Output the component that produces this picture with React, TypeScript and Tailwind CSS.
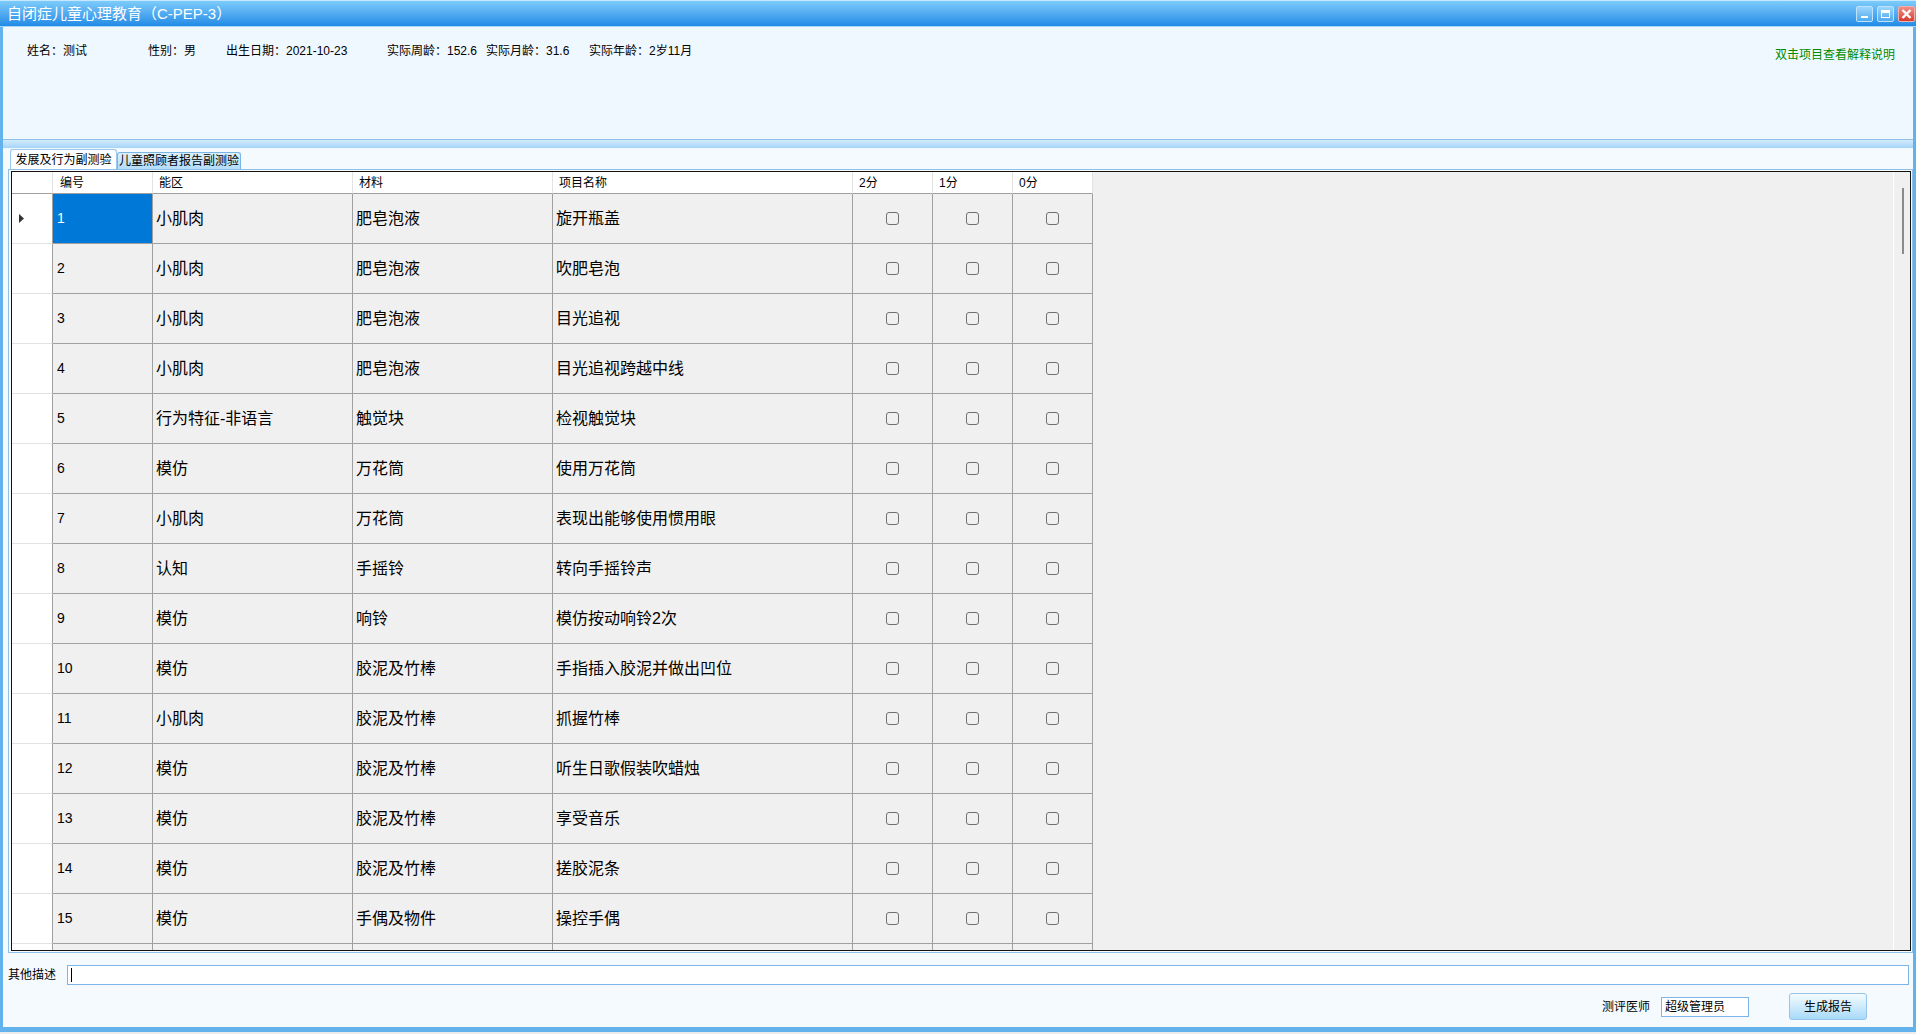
import React from 'react';

interface Item {
  id: number | null;
  area: string;
  material: string;
  name: string;
}

const items: Item[] = [
  { id: 1, area: '小肌肉', material: '肥皂泡液', name: '旋开瓶盖' },
  { id: 2, area: '小肌肉', material: '肥皂泡液', name: '吹肥皂泡' },
  { id: 3, area: '小肌肉', material: '肥皂泡液', name: '目光追视' },
  { id: 4, area: '小肌肉', material: '肥皂泡液', name: '目光追视跨越中线' },
  { id: 5, area: '行为特征-非语言', material: '触觉块', name: '检视触觉块' },
  { id: 6, area: '模仿', material: '万花筒', name: '使用万花筒' },
  { id: 7, area: '小肌肉', material: '万花筒', name: '表现出能够使用惯用眼' },
  { id: 8, area: '认知', material: '手摇铃', name: '转向手摇铃声' },
  { id: 9, area: '模仿', material: '响铃', name: '模仿按动响铃2次' },
  { id: 10, area: '模仿', material: '胶泥及竹棒', name: '手指插入胶泥并做出凹位' },
  { id: 11, area: '小肌肉', material: '胶泥及竹棒', name: '抓握竹棒' },
  { id: 12, area: '模仿', material: '胶泥及竹棒', name: '听生日歌假装吹蜡烛' },
  { id: 13, area: '模仿', material: '胶泥及竹棒', name: '享受音乐' },
  { id: 14, area: '模仿', material: '胶泥及竹棒', name: '搓胶泥条' },
  { id: 15, area: '模仿', material: '手偶及物件', name: '操控手偶' },
  // next row is only a sliver at the bottom edge
  { id: null, area: '', material: '', name: '' },
];

const info = [
  { text: '姓名：测试', w: 'w-[121px]' },
  { text: '性别：男', w: 'w-[78px]' },
  { text: '出生日期：2021-10-23', w: 'w-[161px]' },
  { text: '实际周龄：152.6', w: 'w-[99px]' },
  { text: '实际月龄：31.6', w: 'w-[103px]' },
  { text: '实际年龄：2岁11月', w: '' },
];

function Box() {
  return <span className="block w-[13px] h-[13px] rounded-[3px] border border-[#707070]" />;
}

function WinButtons() {
  return (
    <div className="flex gap-[4px] pr-[1px]">
      <div className="w-[17px] h-[16px] rounded-[2px] border border-[#bfe3ff] bg-gradient-to-b from-[#9ad6fc] to-[#4ea9ee] flex items-end justify-center pb-[3px]">
        <span className="block w-[7px] h-[2px] bg-white" />
      </div>
      <div className="w-[17px] h-[16px] rounded-[2px] border border-[#bfe3ff] bg-gradient-to-b from-[#9ad6fc] to-[#4ea9ee] flex items-center justify-center">
        <span className="block w-[9px] h-[8px] border border-white border-t-[3px]" />
      </div>
      <div className="w-[17px] h-[16px] rounded-[2px] border border-[#f3b1aa] bg-gradient-to-b from-[#f08f86] to-[#d33a2f] flex items-center justify-center">
        <svg width="11" height="10" viewBox="0 0 11 10">
          <path d="M1.5 1 L9.5 9 M9.5 1 L1.5 9" stroke="white" strokeWidth="2.4" />
        </svg>
      </div>
    </div>
  );
}

export default function App() {
  const cell = 'h-[50px] shrink-0 border-b border-r border-[#a0a0a0] flex items-center';
  const head = 'h-[22px] shrink-0 bg-white border-b border-b-[#a0a0a0] border-r border-r-[#e3e3e3] flex items-center pl-[6px] text-[12px]';

  return (
    <div className="w-[1916px] h-[1034px] overflow-hidden bg-[#ececec] font-['Liberation_Sans','Noto_Sans_CJK_SC',sans-serif] text-black">
      <div className="h-[1032px] flex flex-col">
        {/* title bar */}
        <div className="h-[27px] shrink-0 flex items-center justify-between border-t border-[#c6e8ff] border-b border-b-[#a8d6f7] bg-gradient-to-b from-[#7ccbfa] to-[#208be6]">
          <span className="pl-[7px] text-[15px] leading-[18px] text-white">自闭症儿童心理教育（C-PEP-3）</span>
          <WinButtons />
        </div>

        <div className="flex-1 flex flex-col border-x-[3px] border-b-[5px] border-[#62b2ee] bg-[#f5faff]">
          {/* patient info */}
          <div className="h-[113px] shrink-0 flex justify-between bg-[#f0f8ff] border-b border-[#8fc0ea]">
            <div className="flex pl-[24px] pt-[17px] text-[12px] leading-[14px] h-fit">
              {info.map(i => (
                <span key={i.text} className={`${i.w} shrink-0 whitespace-nowrap`}>{i.text}</span>
              ))}
            </div>
            <span className="pt-[21px] pr-[18px] text-[12px] leading-[14px] text-[#008a00]">双击项目查看解释说明</span>
          </div>

          {/* splitter */}
          <div className="h-[9px] shrink-0 bg-gradient-to-b from-[#d3ebfc] to-[#a6d4f7] border-b border-[#f0f8ff]" />

          {/* tabs */}
          <div className="h-[20px] shrink-0 flex items-end pl-[7px]">
            <div className="h-[20px] w-[107px] flex items-center justify-center rounded-t-[3px] border border-b-0 border-[#9cc6ea] bg-[#fbfdff] text-[12px]">
              发展及行为副测验
            </div>
            <div className="h-[17px] w-[124px] flex items-center justify-center rounded-t-[3px] border border-b-0 border-[#7bb3e3] bg-gradient-to-b from-[#dcf0fd] to-[#b3dcf8] text-[12px]">
              儿童照顾者报告副测验
            </div>
          </div>

          {/* tab page */}
          <div className="h-[784px] shrink-0 ml-[5px] border border-[#8fc0ea] pl-[2px] pt-[1px] pr-[1px] pb-[1px] bg-[#f8fcff]">
            <div className="h-full flex border border-[#111] bg-[#f0f0f0]">
              <div className="flex-1 overflow-hidden">
                <div className="flex">
                  <div className={`${head} w-[41px] border-r-[#a0a0a0]`} />
                  <div className={`${head} w-[100px] pl-[7px]`}>编号</div>
                  <div className={`${head} w-[200px]`}>能区</div>
                  <div className={`${head} w-[200px]`}>材料</div>
                  <div className={`${head} w-[300px]`}>项目名称</div>
                  <div className={`${head} w-[80px]`}>2分</div>
                  <div className={`${head} w-[80px]`}>1分</div>
                  <div className={`${head} w-[80px]`}>0分</div>
                </div>
                {items.map((it, idx) => (
                  <div key={idx} className="flex">
                    <div className="h-[50px] w-[41px] shrink-0 bg-white border-b border-[#e2e2e2] border-r border-r-[#a0a0a0] flex items-center pl-[7px]">
                      {idx === 0 && (
                        <svg width="6" height="9" viewBox="0 0 6 9">
                          <path d="M0 0 L5 4.5 L0 9 Z" fill="#333" />
                        </svg>
                      )}
                    </div>
                    <div className={`${cell} w-[100px] pl-[4px] text-[14px] ${idx === 0 ? 'bg-[#0078d7] text-white' : ''}`}>{it.id}</div>
                    <div className={`${cell} w-[200px] pl-[3px] text-[16px]`}>{it.area}</div>
                    <div className={`${cell} w-[200px] pl-[3px] text-[16px]`}>{it.material}</div>
                    <div className={`${cell} w-[300px] pl-[3px] text-[16px]`}>{it.name}</div>
                    <div className={`${cell} w-[80px] justify-center`}>{it.id !== null && <Box />}</div>
                    <div className={`${cell} w-[80px] justify-center`}>{it.id !== null && <Box />}</div>
                    <div className={`${cell} w-[80px] justify-center`}>{it.id !== null && <Box />}</div>
                  </div>
                ))}
              </div>
              {/* thin scrollbar */}
              <div className="w-[17px] shrink-0 border-l border-white pt-[16px] pl-[8px]">
                <div className="w-[2px] h-[66px] bg-[#8a8a8a]" />
              </div>
            </div>
          </div>

          {/* other description */}
          <div className="mt-[12px] h-[20px] shrink-0 flex items-center pl-[5px] pr-[4px]">
            <span className="w-[59px] shrink-0 text-[12px]">其他描述</span>
            <div className="flex-1 h-[20px] border border-[#7eb4ea] bg-white flex items-center pl-[3px]">
              <span className="block w-[1px] h-[14px] bg-black" />
            </div>
          </div>

          {/* doctor + report */}
          <div className="mt-[8px] h-[27px] shrink-0 flex items-center justify-end pr-[46px]">
            <span className="text-[12px] mr-[11px]">测评医师</span>
            <div className="w-[88px] h-[20px] border border-[#7eb4ea] bg-white flex items-center pl-[3px] text-[12px]">超级管理员</div>
            <button className="ml-[40px] w-[78px] h-[27px] rounded-[3px] border border-[#96c4ea] bg-gradient-to-b from-[#f4fbff] to-[#a8daf9] text-[12px]">
              生成报告
            </button>
          </div>
        </div>
      </div>
    </div>
  );
}
